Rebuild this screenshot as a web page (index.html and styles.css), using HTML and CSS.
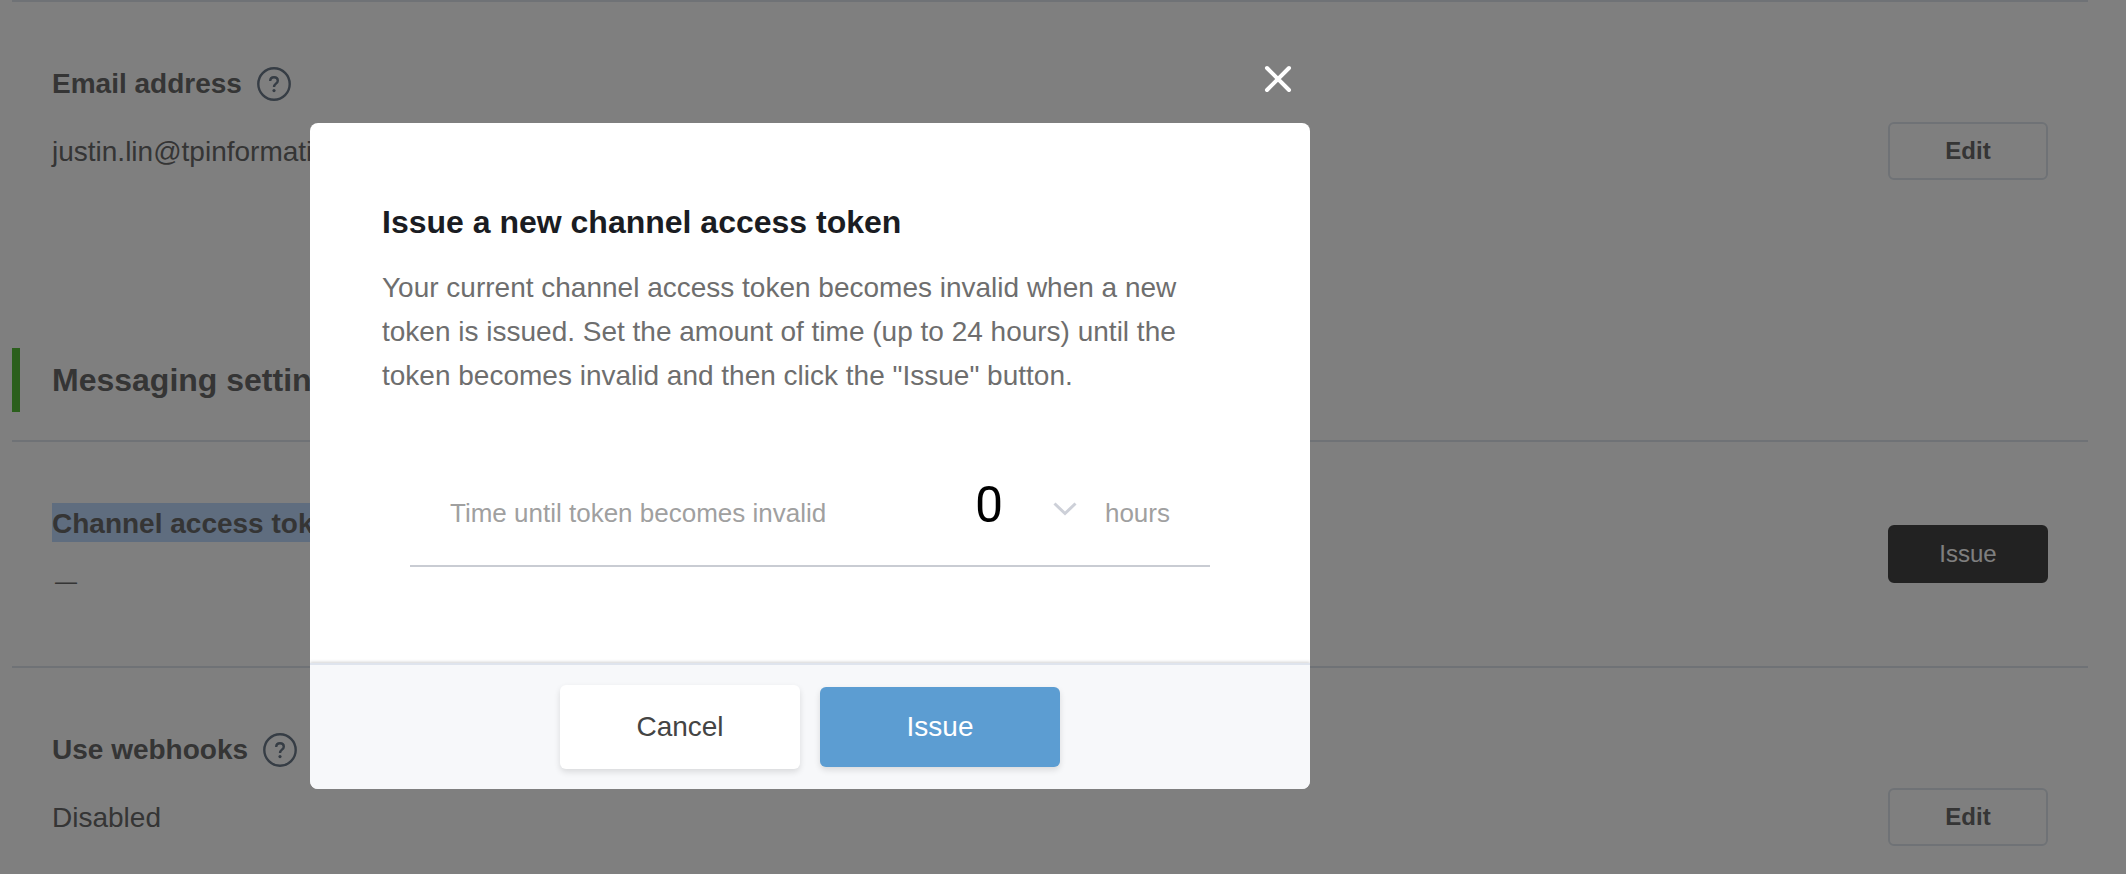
FILE: index.html
```html
<!DOCTYPE html>
<html lang="en">
<head>
  <meta charset="UTF-8" />
  <meta name="viewport" content="width=device-width, initial-scale=1.0"/>
  <title>Channel settings</title>
  <link rel="stylesheet" href="styles.css">
</head>
<body>
  <main class="settings">
    <section class="item">
      <h3 class="item-title">
        Email address
        <button class="help" type="button" aria-label="Help">
          <svg viewBox="0 0 34 34"><circle cx="17" cy="17" r="15.7"/><path d="M13.2 14c0-2.3 1.6-3.7 3.8-3.7s3.8 1.4 3.8 3.4c0 3-3.8 3-3.8 6.2"/><circle class="dot" cx="17" cy="23.6" r="1.6"/></svg>
        </button>
      </h3>
      <div class="item-row">
        <span class="value">justin.lin@tpinformation</span>
        <button class="btn" type="button">Edit</button>
      </div>
    </section>

    <h2 class="section-title">Messaging settings</h2>

    <section class="item item-split">
      <div class="item-text">
        <h3 class="item-title"><span><mark>Channel access token</mark></span></h3>
        <span class="dash">—</span>
      </div>
      <button class="btn btn-dark" type="button">Issue</button>
    </section>

    <section class="item">
      <h3 class="item-title">
        Use webhooks
        <button class="help" type="button" aria-label="Help">
          <svg viewBox="0 0 34 34"><circle cx="17" cy="17" r="15.7"/><path d="M13.2 14c0-2.3 1.6-3.7 3.8-3.7s3.8 1.4 3.8 3.4c0 3-3.8 3-3.8 6.2"/><circle class="dot" cx="17" cy="23.6" r="1.6"/></svg>
        </button>
      </h3>
      <div class="item-row">
        <span class="value">Disabled</span>
        <button class="btn" type="button">Edit</button>
      </div>
    </section>
  </main>

  <!-- Issue token dialog -->
  <div class="overlay">
    <div class="dialog" role="dialog" aria-labelledby="dialogTitle">
      <button class="close" type="button" aria-label="Close">
        <svg viewBox="0 0 44 44"><path d="M11 11l22 22M33 11L11 33"/></svg>
      </button>
      <form class="card">
        <div class="card-body">
          <h2 class="card-title" id="dialogTitle">Issue a new channel access token</h2>
          <p class="card-text">Your current channel access token becomes invalid when a new token is issued. Set the amount of time (up to 24 hours) until the token becomes invalid and then click the "Issue" button.</p>
          <div class="field">
            <label for="hours">Time until token becomes invalid</label>
            <div class="select">
              <select id="hours">
                <option selected>0</option>
                <option>1</option>
                <option>6</option>
                <option>12</option>
                <option>24</option>
              </select>
              <svg class="arrow" viewBox="0 0 24 14"><path d="M1.5 1.5L12 11.5 22.5 1.5"/></svg>
            </div>
            <span class="unit">hours</span>
          </div>
        </div>
        <div class="card-footer">
          <button class="action cancel" type="button">Cancel</button>
          <button class="action issue" type="button">Issue</button>
        </div>
      </form>
    </div>
  </div>
</body>
</html>
```
FILE: styles.css
```css
* {
  box-sizing: border-box;
}

body {
  margin: 0;
  height: 100vh;
  overflow: hidden;
  background: #fff;
  color: #6a6a6a;
  font-family: "Helvetica Neue", "Liberation Sans", Arial, sans-serif;
  font-size: 28px;
  line-height: 44px;
}

h2, h3, p {
  margin: 0;
}

button, select {
  font-family: inherit;
  margin: 0;
  padding: 0;
  border: none;
  background: none;
  cursor: pointer;
}

svg {
  display: block;
  fill: none;
}

/* Settings page */
.settings {
  margin: 0 38px 0 12px;
}

.item {
  border-top: 2px solid #dee5ec;
  padding: 60px 40px;
}

.item-title {
  display: flex;
  align-items: center;
  gap: 15px;
  margin-bottom: 16px;
  font-size: 28px;
}

.item-row, .item-split {
  display: flex;
  align-items: center;
  justify-content: space-between;
}

.item-text {
  display: flex;
  flex-direction: column;
}

.value {
  padding-top: 2px;
}

.dash {
  padding: 0 3px 4px;
  font-size: 22px;
  line-height: 40px;
}

mark {
  padding: 5px 0 3px;
  background: #bedaff;
  color: inherit;
}

.help {
  width: 34px;
  height: 34px;
}

.help svg {
  stroke: #6c7a8a;
  stroke-width: 2.4;
}

.help .dot {
  fill: #6c7a8a;
  stroke: none;
}

.btn {
  width: 160px;
  height: 58px;
  border: 2px solid #dee5ec;
  border-radius: 6px;
  color: #6a6a6a;
  font-size: 24px;
  font-weight: bold;
}

.btn-dark {
  border-color: #444;
  background: #444;
  color: #fff;
  font-weight: normal;
}

.section-title {
  margin: 108px 0 28px;
  padding-left: 32px;
  border-left: 8px solid #56be38;
  font-size: 32px;
  line-height: 64px;
}

/* Dialog */
.overlay {
  position: fixed;
  inset: 0;
  padding: 57px 310px 0;
  background: rgba(0, 0, 0, 0.5);
}

.dialog {
  max-width: 1000px;
}

.close {
  display: block;
  width: 44px;
  margin: 0 10px 22px auto;
}

.close svg {
  stroke: #fff;
  stroke-width: 4;
  stroke-linecap: round;
}

.card {
  overflow: hidden;
  border-radius: 8px;
  background: #fff;
}

.card-body {
  padding: 77px 72px 96px;
}

.card-title {
  margin-bottom: 22px;
  color: #1a1c22;
  font-size: 32px;
}

.card-text {
  margin-bottom: 77px;
  color: #6e6e6e;
}

.field {
  display: flex;
  align-items: baseline;
  margin: 0 28px;
  padding: 0 40px 30px;
  border-bottom: 2px solid #c9ccd3;
  color: #a0a0a0;
  font-size: 26px;
}

.field label {
  flex: 1;
}

.select {
  position: relative;
}

.select select {
  appearance: none;
  width: 104px;
  height: 60px;
  color: #000;
  font-family: Roboto, sans-serif;
  font-size: 50px;
}

/* chevron drawn over the right end of the select */
.arrow {
  position: absolute;
  top: 27px;
  right: 2px;
  width: 24px;
  stroke: #cdd0d8;
  stroke-width: 3;
  pointer-events: none;
}

.unit {
  margin-left: 26px;
}

.card-footer {
  display: flex;
  align-items: center;
  justify-content: center;
  gap: 20px;
  padding: 20px;
  border-top: 2px solid #dfe4ed;
  background: #f7f8fa;
  box-shadow: 0 -1px 3px rgba(0, 0, 0, 0.18);
}

.action {
  width: 240px;
  height: 80px;
  border-radius: 6px;
  font-size: 28px;
  box-shadow: 0 3px 6px rgba(0, 0, 0, 0.12);
}

.cancel {
  height: 84px;
  background: #fff;
  color: #444;
}

.issue {
  background: #5c9dd2;
  color: #fff;
}
```
